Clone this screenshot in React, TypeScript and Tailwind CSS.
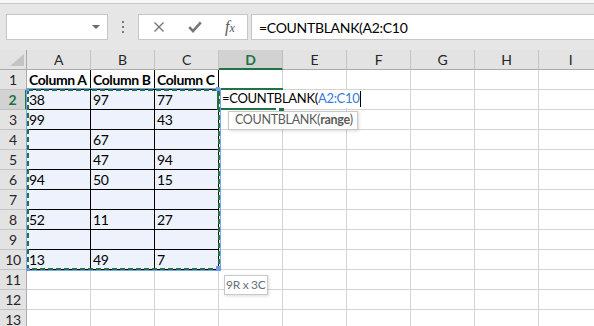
import React from 'react'

const COLS = ['A', 'B', 'C', 'D', 'E', 'F', 'G', 'H', 'I']

const DATA: string[][] = [
  ['Column A', 'Column B', 'Column C'],
  ['38', '97', '77'],
  ['99', '', '43'],
  ['', '67', ''],
  ['', '47', '94'],
  ['94', '50', '15'],
  ['', '', ''],
  ['52', '11', '27'],
  ['', '', ''],
  ['13', '49', '7'],
]

function CrossIcon() {
  return (
    <svg width="12" height="12" viewBox="0 0 12 12" fill="none" stroke="#767676" strokeWidth="1.4">
      <path d="M1.5 1.5l9 9M10.5 1.5l-9 9" />
    </svg>
  )
}

function CheckIcon() {
  return (
    <svg width="14" height="12" viewBox="0 0 14 12" fill="none" stroke="#767676" strokeWidth="2.6" strokeLinejoin="miter">
      <path d="M1.2 6.2l3.8 3.8 7.8-8.6" />
    </svg>
  )
}

function FormulaBar() {
  return (
    <div className="flex h-[46px] items-start bg-[#e6e6e6] pt-[10px]">
      <div className="ml-[6px] flex h-[26px] w-[102px] items-center justify-end border border-[#c6c6c6] bg-white pr-[7px]">
        <div className="h-0 w-0 border-x-[4px] border-t-[4px] border-x-transparent border-t-[#6a6a6a]" />
      </div>
      <div className="flex h-[26px] w-[30px] flex-col items-center justify-center gap-[3px]">
        <span className="h-[2px] w-[2px] bg-[#7a7a7a]" />
        <span className="h-[2px] w-[2px] bg-[#7a7a7a]" />
        <span className="h-[2px] w-[2px] bg-[#7a7a7a]" />
      </div>
      <div className="flex h-[26px] w-[110px] items-center border border-[#c6c6c6] bg-white">
        <div className="flex w-[38px] justify-center pl-[2px]"><CrossIcon /></div>
        <div className="flex w-[36px] justify-center"><CheckIcon /></div>
        <div className="flex w-[34px] items-baseline justify-center font-['Liberation_Serif',serif] text-[16px] italic tracking-normal text-[#555]">
          f<span className="text-[12px]">x</span>
        </div>
      </div>
      <div className="ml-[3px] flex h-[26px] flex-1 items-center border border-r-0 border-[#c6c6c6] bg-white pl-[7px] text-[14px] text-black">
        =COUNTBLANK(A2:C10
      </div>
    </div>
  )
}

function Sheet() {
  const rows = Array.from({ length: 13 }, (_, i) => i + 1)
  return (
    <div className="relative grid grid-cols-[27px_repeat(9,64px)] auto-rows-[20px] text-[14px]">
      <div className="relative border-r border-b border-[#ababab] bg-[#e3e3e3]">
        <svg className="absolute left-[10px] top-[4px]" width="14" height="12" viewBox="0 0 14 12">
          <path d="M14 0V12H0Z" fill="#c4c4c4" />
        </svg>
      </div>
      {COLS.map((c) =>
        c === 'D' ? (
          <div key={c} className="flex items-center justify-center border-r border-b-2 border-r-[#bdbdbd] border-b-[#217346] bg-[#d2d2d2] font-bold text-[#217346]">
            {c}
          </div>
        ) : (
          <div key={c} className="flex items-center justify-center border-r border-b border-r-[#c4c4c4] border-b-[#ababab] bg-[#e3e3e3] text-[#262626]">
            {c}
          </div>
        )
      )}
      {rows.map((r) => (
        <React.Fragment key={r}>
          {r === 2 ? (
            <div className="flex items-center justify-center border-r-2 border-b border-r-[#217346] border-b-[#bdbdbd] bg-[#d2d2d2] font-bold text-[#217346]">
              {r}
            </div>
          ) : (
            <div className="flex items-center justify-center border-r border-b border-r-[#ababab] border-b-[#c4c4c4] bg-[#e3e3e3] text-[#262626]">
              {r}
            </div>
          )}
          {COLS.map((c, ci) => {
            const inTable = r <= 10 && ci < 3
            const value = inTable ? DATA[r - 1][ci] : ''
            if (inTable) {
              return (
                <div
                  key={c}
                  className={`flex items-center overflow-hidden whitespace-nowrap border-r border-b border-black pl-[2px] text-black ${r === 1 ? 'bg-white font-bold tracking-[-0.4px]' : 'bg-[#edf2fc]'}`}
                >
                  {value}
                </div>
              )
            }
            return <div key={c} className="border-r border-b border-[#d4d4d4] bg-white" />
          })}
        </React.Fragment>
      ))}

      {/* active cell D2 being edited */}
      <div className="absolute left-[217px] top-[38px] h-[22px] w-[66px] border-2 border-r-0 border-[#217346]" />
      <div className="absolute left-[276px] top-[58px] h-[2px] w-[3px] bg-white" />
      <div className="absolute left-[279px] top-[58px] h-[4px] w-[5px] bg-[#217346]" />
      <div className="absolute left-[219px] top-[40px] flex h-[18px] w-[146px] items-center bg-white pl-[3px] text-[13px] whitespace-nowrap">
        <span className="text-black">=COUNTBLANK(</span>
        <span className="text-[#3b78d8]">A2:C10</span>
        <span className="ml-[1px] h-[16px] w-[1px] bg-black" />
      </div>

      {/* copy range marching ants */}
      <svg className="absolute left-[26px] top-[38px]" width="196" height="184" viewBox="0 0 196 184" fill="none">
        <rect x="0.5" y="0.5" width="194" height="182" stroke="#7aa3ec" strokeWidth="1" />
        <rect x="2" y="2" width="191" height="179" stroke="#217346" strokeWidth="2" strokeDasharray="5 3" />
      </svg>
      <div className="absolute left-[26px] top-[38px] h-[3px] w-[3px] bg-[#6d9bea]" />
      <div className="absolute left-[216px] top-[37px] h-[4px] w-[4px] bg-[#6d9bea]" />
      <div className="absolute left-[27px] top-[218px] h-[3px] w-[3px] bg-[#6d9bea]" />
      <div className="absolute left-[216px] top-[216px] h-[5px] w-[5px] bg-[#6d9bea]" />

      {/* function tooltip */}
      <div className="absolute left-[228px] top-[61px] flex h-[19px] w-[130px] items-center whitespace-nowrap border border-[#c8c8c8] bg-white pl-[6px] text-[12.5px] text-[#5a5a5a] shadow-[1px_1px_3px_rgba(0,0,0,0.15)]">
        COUNTBLANK(<span className="font-bold">range</span>)
      </div>

      {/* size tooltip */}
      <div className="absolute left-[224px] top-[225px] flex h-[20px] items-center whitespace-nowrap border border-[#c8c8c8] bg-white pl-[1px] pr-[2px] text-[12px] text-[#6b6f7a] shadow-[1px_1px_3px_rgba(0,0,0,0.15)]">
        9R x 3C
      </div>
    </div>
  )
}

export default function App() {
  return (
    <div className="h-[326px] w-[594px] overflow-hidden bg-white font-['Lato',sans-serif] tracking-[-0.3px]">
      <div className="h-[4px] border-b border-[#c8c8c8] bg-[#f7f7f7]" />
      <FormulaBar />
      <Sheet />
    </div>
  )
}
